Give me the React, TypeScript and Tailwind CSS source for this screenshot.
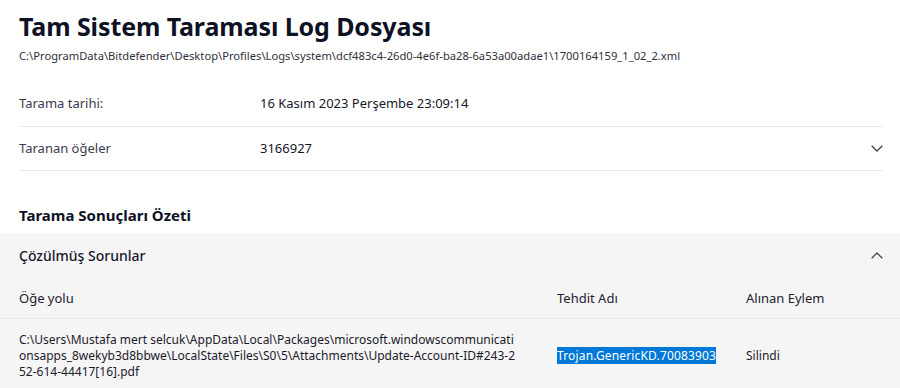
import React from 'react';

function Chevron({ up = false }: { up?: boolean }) {
  return (
    <svg width="12" height="7" viewBox="0 0 12 7" fill="none" className="shrink-0">
      <path
        d={up ? 'M0.7 6.3 L6 1 L11.3 6.3' : 'M0.7 0.7 L6 6 L11.3 0.7'}
        stroke="#3e4655"
        strokeWidth="1.3"
      />
    </svg>
  );
}

// the path wraps exactly where the original window wraps it
const itemPath = [
  'C:\\Users\\Mustafa mert selcuk\\AppData\\Local\\Packages\\microsoft.windowscommunicati',
  'onsapps_8wekyb3d8bbwe\\LocalState\\Files\\S0\\5\\Attachments\\Update-Account-ID#243-2',
  '52-614-44417[16].pdf',
];

export default function App() {
  return (
    <div
      className="w-[900px] h-[388px] overflow-hidden bg-white"
      style={{ fontFamily: '"Noto Sans", "Open Sans", sans-serif' }}
    >
      <div className="px-[19px] pt-[10px]">
        <h1 className="text-[25px] leading-[32px] font-bold text-[#0d1224] tracking-[-0.1px]">
          Tam Sistem Taraması Log Dosyası
        </h1>
        <p className="mt-[6px] text-[11.2px] leading-[16px] text-[#2f2f3a]">
          C:\ProgramData\Bitdefender\Desktop\Profiles\Logs\system\dcf483c4-26d0-4e6f-ba28-6a53a00adae1\1700164159_1_02_2.xml
        </p>
      </div>

      <div className="ml-[19px] mr-[17px] mt-[17px]">
        <div className="flex items-center h-[46px] border-b border-[#e9e9ec] text-[13px]">
          <span className="w-[241px] text-[#3b3a4c]">Tarama tarihi:</span>
          <span className="text-[#17172a]">16 Kasım 2023 Perşembe 23:09:14</span>
        </div>
        <div className="flex items-center h-[44px] border-b border-[#e9e9ec] text-[13px]">
          <span className="w-[241px] text-[#3b3a4c]">Taranan öğeler</span>
          <span className="flex-1 text-[#17172a]">3166927</span>
          <Chevron />
        </div>
      </div>

      <h2 className="px-[19px] mt-[32px] text-[15px] leading-[24px] font-bold text-[#0d1224]">
        Tarama Sonuçları Özeti
      </h2>

      <div className="mt-[6px] bg-[#f5f5f6]">
        <div className="flex items-center h-[44px] pl-[19px] pr-[17px]">
          <span className="flex-1 text-[14px] font-medium text-[#17172a]">Çözülmüş Sorunlar</span>
          <Chevron up />
        </div>
        <div className="grid grid-cols-[538px_189px_1fr] pl-[19px] pt-[11px] pb-[10px] border-b border-[#e8e8ea] text-[13px] leading-[20px] text-[#22212f]">
          <span>Öğe yolu</span>
          <span>Tehdit Adı</span>
          <span>Alınan Eylem</span>
        </div>
        <div className="grid grid-cols-[538px_189px_1fr] items-center pl-[19px] pt-[13px] pb-[10px] text-[12px] leading-[16px] text-[#1c1b29]">
          <div className="flex flex-col whitespace-nowrap">
            {itemPath.map((line) => (
              <span key={line}>{line}</span>
            ))}
          </div>
          <span>
            <span className="bg-[#0078d7] text-white tracking-[0.15px]">Trojan.GenericKD.70083903</span>
          </span>
          <span>Silindi</span>
        </div>
      </div>
    </div>
  );
}
